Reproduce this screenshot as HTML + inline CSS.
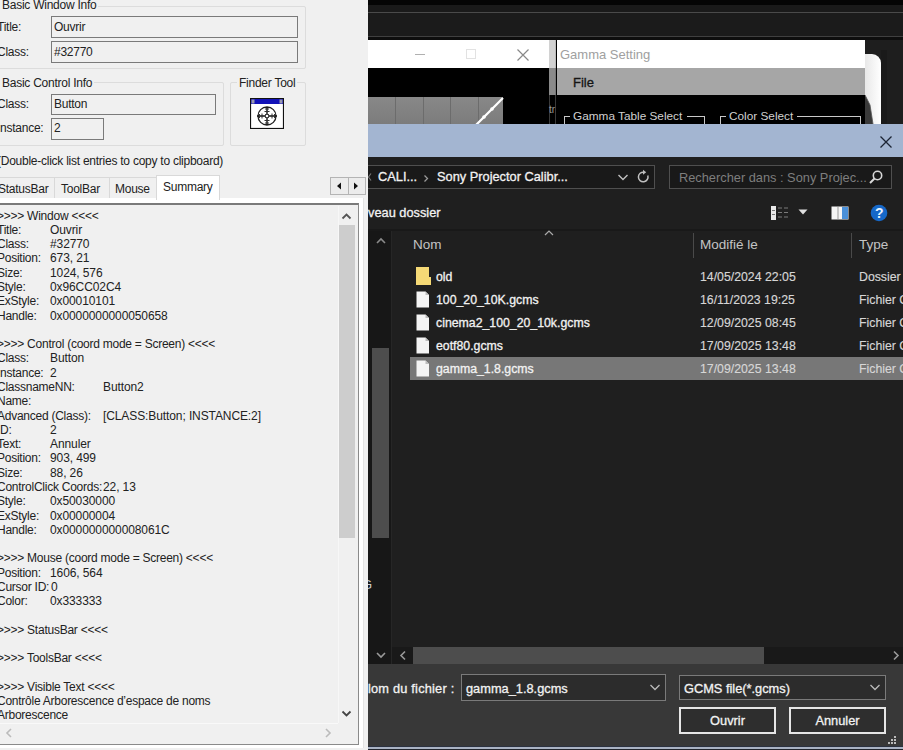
<!DOCTYPE html>
<html><head><meta charset="utf-8">
<style>
*{margin:0;padding:0;box-sizing:border-box}
html,body{width:903px;height:750px;overflow:hidden;background:#000}
body{position:relative;font-family:"Liberation Sans",sans-serif}
.a{position:absolute}
.t{position:absolute;white-space:pre;line-height:14px}
#left{position:absolute;left:0;top:0;width:368px;height:750px;background:#f0f0f0;overflow:hidden;color:#222;font-size:12px}
#left .t{letter-spacing:-0.25px}
.grp{position:absolute;border:1px solid #dcdcdc;border-radius:2px}
.inp{position:absolute;border:1px solid #7a7a7a;background:#f0f0f0}
.tab{position:absolute;top:177px;height:21px;border:1px solid #d9d9d9;border-bottom:none;background:#f0f0f0}
.ln{position:absolute;left:-3px;white-space:pre;line-height:14px;letter-spacing:-0.25px}
.v{position:absolute;white-space:pre;line-height:14px;letter-spacing:-0.1px}
#right{position:absolute;left:368px;top:0;width:535px;height:750px;overflow:hidden}
.dk{color:#f2f2f2;font-size:12.8px;-webkit-text-stroke:0.3px currentColor}
#right .t{-webkit-text-stroke:0}
#right .dk,#right .hd{-webkit-text-stroke:0.3px currentColor}
</style></head><body>

<div id="left">
  <!-- Basic Window Info -->
  <div class="grp" style="left:-10px;top:6px;width:316px;height:63px"></div>
  <div class="t" style="left:0;top:-2px;background:#f0f0f0;padding:0 2px">Basic Window Info</div>
  <div class="t" style="left:-3px;top:20px">Title:</div>
  <div class="inp" style="left:51px;top:16px;width:247px;height:22px"></div>
  <div class="t" style="left:54px;top:20px">Ouvrir</div>
  <div class="t" style="left:-3px;top:45px">Class:</div>
  <div class="inp" style="left:51px;top:41px;width:247px;height:22px"></div>
  <div class="t" style="left:54px;top:45px">#32770</div>

  <!-- Basic Control Info -->
  <div class="grp" style="left:-10px;top:82px;width:234px;height:64px"></div>
  <div class="t" style="left:0;top:76px;background:#f0f0f0;padding:0 2px">Basic Control Info</div>
  <div class="t" style="left:-3px;top:97px">Class:</div>
  <div class="inp" style="left:51px;top:94px;width:165px;height:21px"></div>
  <div class="t" style="left:54px;top:97px">Button</div>
  <div class="t" style="left:-3px;top:121px">Instance:</div>
  <div class="inp" style="left:51px;top:118px;width:53px;height:22px"></div>
  <div class="t" style="left:54px;top:121px">2</div>

  <!-- Finder Tool -->
  <div class="grp" style="left:230px;top:82px;width:76px;height:64px"></div>
  <div class="t" style="left:237px;top:76px;background:#f0f0f0;padding:0 2px">Finder Tool</div>
  <svg class="a" style="left:250px;top:98px" width="34" height="31" viewBox="0 0 34 31">
    <rect x="0.5" y="0.5" width="33" height="30" fill="#fff" stroke="#111" stroke-width="1.2"/>
    <rect x="1" y="1" width="32" height="5" fill="#1212b8"/>
    <rect x="1.5" y="1.5" width="3" height="4" fill="#9a9ab0"/><rect x="29.5" y="1.5" width="3" height="4" fill="#9a9ab0"/>
    <circle cx="17" cy="18" r="9" fill="none" stroke="#222" stroke-width="1.3"/>
    <path d="M7 18H15M19 18H27M17 9V16M17 20V27" stroke="#111" stroke-width="1.4"/>
    <path d="M9.5 16v4M12 15.5v5M22 15.5v5M24.5 16v4M15 11h4M14.5 13.5h5M14.5 22.5h5M15 25h4" stroke="#333" stroke-width="1"/>
    <rect x="15.5" y="16.5" width="3" height="3" fill="none" stroke="#444" stroke-width="1"/>
  </svg>

  <div class="t" style="left:-3px;top:154px">(Double-click list entries to copy to clipboard)</div>

  <!-- Tabs -->
  <div class="tab" style="left:-10px;width:65px"></div>
  <div class="tab" style="left:54px;width:56px"></div>
  <div class="tab" style="left:109px;width:48px"></div>
  <div class="t" style="left:-2px;top:182px">StatusBar</div>
  <div class="t" style="left:61px;top:182px">ToolBar</div>
  <div class="t" style="left:115px;top:182px">Mouse</div>
  <div class="a" style="left:0;top:198px;width:364px;height:550px;background:#fff;border-right:1px solid #e3e3e3"></div>
  <div class="a" style="left:156px;top:175px;width:64px;height:25px;background:#fff;border:1px solid #d9d9d9;border-bottom:none"></div>
  <div class="t" style="left:163px;top:180px">Summary</div>

  <div class="a" style="left:330px;top:177px;width:36px;height:18px;border:1px solid #b4b4b4;background:#ececec"></div>
  <div class="a" style="left:348px;top:178px;width:1px;height:16px;background:#b4b4b4"></div>
  <svg class="a" style="left:330px;top:177px" width="36" height="18"><path d="M7 9l4-3.5v7z M24 5.5l4 3.5-4 3.5z" fill="#111"/></svg>

  <!-- Edit control -->
  <div class="a" style="left:-4px;top:203px;width:363px;height:542px;border:1px solid #8a8a8a;border-top:2px solid #7a7a7a;background:#f0f0f0"></div>
  <!-- vscroll -->
  <div class="a" style="left:338px;top:206px;width:17px;height:517px;background:#f0f0f0;border-left:1px solid #f7f7f7"></div>
  <div class="a" style="left:339px;top:225px;width:16px;height:313px;background:#cdcdcd"></div>
  <svg class="a" style="left:338px;top:209px" width="17" height="14"><path d="M4.5 9.5L8.5 5.5L12.5 9.5" fill="none" stroke="#555" stroke-width="1.8"/></svg>
  <svg class="a" style="left:338px;top:707px" width="17" height="14"><path d="M4.5 4.5L8.5 8.5L12.5 4.5" fill="none" stroke="#444" stroke-width="1.8"/></svg>
  <!-- hscroll -->
  <div class="a" style="left:0;top:723px;width:338px;height:21px;background:#f0f0f0;border-top:1px solid #f9f9f9"></div>
  <svg class="a" style="left:2px;top:726px" width="14" height="14"><path d="M9 3L5 7L9 11" fill="none" stroke="#bbb" stroke-width="1.6"/></svg>
  <svg class="a" style="left:321px;top:726px" width="14" height="14"><path d="M5 3L9 7L5 11" fill="none" stroke="#bbb" stroke-width="1.6"/></svg>

  <div id="lines">
<div class="ln" style="top:208.6px">&gt;&gt;&gt;&gt; Window &lt;&lt;&lt;&lt;</div>
<div class="ln" style="top:222.9px">Title:</div>
<div class="v" style="left:50px;top:222.9px">Ouvrir</div>
<div class="ln" style="top:237.2px">Class:</div>
<div class="v" style="left:50px;top:237.2px">#32770</div>
<div class="ln" style="top:251.4px">Position:</div>
<div class="v" style="left:50px;top:251.4px">673, 21</div>
<div class="ln" style="top:265.7px">Size:</div>
<div class="v" style="left:50px;top:265.7px">1024, 576</div>
<div class="ln" style="top:280.0px">Style:</div>
<div class="v" style="left:50px;top:280.0px">0x96CC02C4</div>
<div class="ln" style="top:294.3px">ExStyle:</div>
<div class="v" style="left:50px;top:294.3px">0x00010101</div>
<div class="ln" style="top:308.6px">Handle:</div>
<div class="v" style="left:50px;top:308.6px">0x0000000000050658</div>
<div class="ln" style="top:337.1px">&gt;&gt;&gt;&gt; Control (coord mode = Screen) &lt;&lt;&lt;&lt;</div>
<div class="ln" style="top:351.4px">Class:</div>
<div class="v" style="left:50px;top:351.4px">Button</div>
<div class="ln" style="top:365.7px">Instance:</div>
<div class="v" style="left:50px;top:365.7px">2</div>
<div class="ln" style="top:380.0px">ClassnameNN:</div>
<div class="v" style="left:103px;top:380.0px">Button2</div>
<div class="ln" style="top:394.2px">Name:</div>
<div class="ln" style="top:408.5px">Advanced (Class):</div>
<div class="v" style="left:103px;top:408.5px">[CLASS:Button; INSTANCE:2]</div>
<div class="ln" style="top:422.8px">ID:</div>
<div class="v" style="left:50px;top:422.8px">2</div>
<div class="ln" style="top:437.1px">Text:</div>
<div class="v" style="left:50px;top:437.1px">Annuler</div>
<div class="ln" style="top:451.4px">Position:</div>
<div class="v" style="left:50px;top:451.4px">903, 499</div>
<div class="ln" style="top:465.6px">Size:</div>
<div class="v" style="left:50px;top:465.6px">88, 26</div>
<div class="ln" style="top:479.9px">ControlClick Coords:</div>
<div class="v" style="left:103px;top:479.9px">22, 13</div>
<div class="ln" style="top:494.2px">Style:</div>
<div class="v" style="left:50px;top:494.2px">0x50030000</div>
<div class="ln" style="top:508.5px">ExStyle:</div>
<div class="v" style="left:50px;top:508.5px">0x00000004</div>
<div class="ln" style="top:522.8px">Handle:</div>
<div class="v" style="left:50px;top:522.8px">0x000000000008061C</div>
<div class="ln" style="top:551.3px">&gt;&gt;&gt;&gt; Mouse (coord mode = Screen) &lt;&lt;&lt;&lt;</div>
<div class="ln" style="top:565.6px">Position:</div>
<div class="v" style="left:50px;top:565.6px">1606, 564</div>
<div class="ln" style="top:579.9px">Cursor ID:</div>
<div class="v" style="left:51px;top:579.9px">0</div>
<div class="ln" style="top:594.2px">Color:</div>
<div class="v" style="left:50px;top:594.2px">0x333333</div>
<div class="ln" style="top:622.7px">&gt;&gt;&gt;&gt; StatusBar &lt;&lt;&lt;&lt;</div>
<div class="ln" style="top:651.3px">&gt;&gt;&gt;&gt; ToolsBar &lt;&lt;&lt;&lt;</div>
<div class="ln" style="top:679.8px">&gt;&gt;&gt;&gt; Visible Text &lt;&lt;&lt;&lt;</div>
<div class="ln" style="top:694.1px">Contrôle Arborescence d’espace de noms</div>
<div class="ln" style="top:708.4px">Arborescence</div>
  </div>
</div>

<div id="right">
  <!-- top dark bands (coords relative: x-368) -->
  <div class="a" style="left:0;top:0;width:535px;height:5px;background:#050505"></div>
  <div class="a" style="left:0;top:5px;width:535px;height:7px;background:#1a1a1a"></div>
  <div class="a" style="left:0;top:12px;width:535px;height:1px;background:#4a4a4a"></div>
  <div class="a" style="left:0;top:13px;width:535px;height:23px;background:#1b1b1b"></div>
  <div class="a" style="left:0;top:36px;width:535px;height:1px;background:#404040"></div>
  <div class="a" style="left:0;top:37px;width:535px;height:3px;background:#0e0e0e"></div>

  <!-- left app window -->
  <div class="a" style="left:0;top:40px;width:181px;height:28px;background:#fff"></div>
  <div class="a" style="left:47px;top:54px;width:10px;height:1px;background:#b0b0b0"></div>
  <div class="a" style="left:98px;top:49px;width:10px;height:10px;border:1px solid #e2e2e2"></div>
  <svg class="a" style="left:148px;top:48px" width="14" height="14"><path d="M1.5 1.5L12.5 12.5M12.5 1.5L1.5 12.5" stroke="#888" stroke-width="1.2"/></svg>
  <div class="a" style="left:0;top:68px;width:181px;height:56px;background:#000"></div>
  <div class="a" style="left:0;top:97px;width:135px;height:27px;background:linear-gradient(#888,#7c7c7c)"></div>
  <div class="a" style="left:27px;top:97px;width:1px;height:27px;background:#6c6c6c"></div>
  <div class="a" style="left:55px;top:97px;width:1px;height:27px;background:#6c6c6c"></div>
  <div class="a" style="left:82px;top:97px;width:1px;height:27px;background:#6c6c6c"></div>
  <div class="a" style="left:110px;top:97px;width:1px;height:27px;background:#6c6c6c"></div>
  <svg class="a" style="left:105px;top:97px" width="32" height="27"><path d="M3 28L30 1" stroke="#fff" stroke-width="2.2"/><circle cx="19" cy="12" r="1.8" fill="#fff"/><circle cx="11" cy="20" r="1.8" fill="#fff"/></svg>
  <!-- separator strip -->
  <div class="a" style="left:181px;top:40px;width:7px;height:28px;background:#d2d2d2;border-right:1px solid #bbb"></div>
  <div class="a" style="left:181px;top:68px;width:7px;height:27px;background:#8a8a8a;border-right:1px solid #777"></div>
  <div class="a" style="left:181px;top:95px;width:1px;height:29px;background:#3a3a3a"></div>
  <div class="a" style="left:187px;top:95px;width:1px;height:29px;background:#3a3a3a"></div>

  <!-- Gamma setting window -->
  <div class="a" style="left:189px;top:40px;width:308px;height:28px;background:#fff"></div>
  <div class="t" style="left:192px;top:47px;font-size:13px;color:#a0a0a0;line-height:15px">Gamma Setting</div>
  <div class="a" style="left:189px;top:68px;width:308px;height:27px;background:#a6a6a6"></div>
  <div class="t hd" style="left:205px;top:75px;font-size:13px;color:#151515;line-height:15px">File</div>
  <div class="a" style="left:189px;top:95px;width:308px;height:29px;background:#000"></div>
  <div class="t" style="left:181px;top:104px;font-size:10px;color:#999;line-height:12px">tr</div>
  <!-- group boxes -->
  <div class="a" style="left:196px;top:116px;width:1px;height:10px;background:#c8c8c8"></div>
  <div class="a" style="left:196px;top:116px;width:6px;height:1px;background:#c8c8c8"></div>
  <div class="t" style="left:205px;top:109px;font-size:11.8px;color:#d0d0d0;line-height:15px">Gamma Table Select</div>
  <div class="a" style="left:319px;top:116px;width:17px;height:1px;background:#c8c8c8"></div>
  <div class="a" style="left:336px;top:116px;width:1px;height:10px;background:#c8c8c8"></div>
  <div class="a" style="left:352px;top:116px;width:1px;height:10px;background:#c8c8c8"></div>
  <div class="a" style="left:352px;top:116px;width:6px;height:1px;background:#c8c8c8"></div>
  <div class="t" style="left:361px;top:109px;font-size:11.8px;color:#d0d0d0;line-height:15px">Color Select</div>
  <div class="a" style="left:429px;top:116px;width:64px;height:1px;background:#c8c8c8"></div>
  <div class="a" style="left:492px;top:116px;width:1px;height:10px;background:#c8c8c8"></div>
  <!-- right of gamma window -->
  <div class="a" style="left:497px;top:40px;width:38px;height:84px;background:#1e1e1e"></div>
  <div class="a" style="left:497px;top:54px;width:16px;height:72px;background:linear-gradient(90deg,#e8e8e8,#fff);border-top-right-radius:9px"></div>
  <svg class="a" style="left:497px;top:95px" width="10" height="29"><path d="M0 0L5 10L8 29H0z" fill="#3a3a3a"/><path d="M0 0L5 10L8 29" fill="none" stroke="#555" stroke-width="0.8"/></svg>
  <div class="a" style="left:513px;top:50px;width:6px;height:74px;background:#1a1a1a"></div>

  <!-- dialog title bar -->
  <div class="a" style="left:0;top:124px;width:535px;height:33px;background:#a3b5d1"></div>
  <svg class="a" style="left:512px;top:136px" width="12" height="12"><path d="M0.5 0.5L11.5 11.5M11.5 0.5L0.5 11.5" stroke="#1c2434" stroke-width="1.3"/></svg>

  <!-- dialog body -->
  <div class="a" style="left:0;top:157px;width:535px;height:507px;background:#1f1f1f"></div>
  <!-- address bar -->
  <div class="a" style="left:-20px;top:165px;width:307px;height:24px;border:1px solid #4f4f4f;background:#191919"></div>
  <svg class="a" style="left:0;top:172px" width="4" height="10"><path d="M3 1.5L0.5 5L3 8.5" fill="none" stroke="#777" stroke-width="1.2"/></svg>
  <div class="t dk" style="left:10px;top:168.5px;line-height:15px">CALI...</div>
  <svg class="a" style="left:54px;top:172px" width="8" height="12"><path d="M2.5 3.5L5.5 6.5L2.5 9.5" fill="none" stroke="#9a9a9a" stroke-width="1.3"/></svg>
  <div class="t dk" style="left:69px;top:168.5px;line-height:15px">Sony Projector Calibr...</div>
  <svg class="a" style="left:248px;top:170px" width="14" height="14"><path d="M2.5 5L7 9.5L11.5 5" fill="none" stroke="#c0c0c0" stroke-width="1.4"/></svg>
  <svg class="a" style="left:268px;top:169px" width="16" height="16"><path d="M11.8 6.5A4.8 4.8 0 1 1 8 3.2" fill="none" stroke="#c0c0c0" stroke-width="1.5"/><path d="M7 0.8L10.2 3.2L7 5.8z" fill="#c0c0c0"/></svg>
  <!-- search -->
  <div class="a" style="left:301px;top:165px;width:223px;height:24px;border:1px solid #4f4f4f;background:#191919"></div>
  <div class="t" style="left:311px;top:170px;font-size:12.8px;color:#7e7e7e;line-height:15px;-webkit-text-stroke:0">Rechercher dans : Sony Projec...</div>
  <svg class="a" style="left:500px;top:169px" width="16" height="16"><circle cx="9.5" cy="6.5" r="4.2" fill="none" stroke="#d8d8d8" stroke-width="1.6"/><path d="M6.5 9.5L2 14" stroke="#d8d8d8" stroke-width="2"/></svg>

  <!-- toolbar -->
  <div class="t dk" style="left:0;top:205px;line-height:15px">veau dossier</div>
  <svg class="a" style="left:402px;top:205px" width="20" height="16"><rect x="1" y="1" width="5" height="14" fill="#e8e8e8"/><path d="M2 5.5h3M2 9.5h3" stroke="#777" stroke-width="1"/><path d="M8 3h4M14 3h4M8 7.5h4M14 7.5h4M8 12h4M14 12h4" stroke="#7a7a7a" stroke-width="1.2"/></svg>
  <svg class="a" style="left:430px;top:208px" width="10" height="8"><path d="M0.5 1.5h9L5 6.5z" fill="#e0e0e0"/></svg>
  <svg class="a" style="left:463px;top:206px" width="19" height="15"><rect x="0.5" y="0.5" width="17" height="13" fill="#f5f5f5"/><rect x="6.5" y="1" width="1" height="12" fill="#999"/><rect x="11" y="1" width="6" height="12" fill="#4a90d9"/></svg>
  <svg class="a" style="left:502px;top:203.5px" width="18" height="18"><circle cx="9" cy="9" r="8.3" fill="#1668c8"/><text x="9.3" y="14.2" text-anchor="middle" font-family="Liberation Sans" font-weight="bold" font-size="14" fill="#e8f4ff">?</text></svg>

  <!-- nav pane -->
  <div class="a" style="left:0;top:230px;width:23px;height:434px;background:#171717"></div>
  <svg class="a" style="left:6px;top:235px" width="14" height="12"><path d="M3 8L7 4L11 8" fill="none" stroke="#8a8a8a" stroke-width="1.6"/></svg>
  <div class="a" style="left:4px;top:348px;width:17px;height:190px;background:#4d4d4d"></div>
  <div class="t" style="left:-6px;top:577px;font-size:13px;color:#cfcfcf;line-height:15px">G</div>
  <svg class="a" style="left:6px;top:649px" width="14" height="12"><path d="M3 4L7 8L11 4" fill="none" stroke="#9a9a9a" stroke-width="1.6"/></svg>
  <div class="a" style="left:23px;top:230px;width:1px;height:434px;background:#262626"></div>

  <!-- list header -->
  <div class="a" style="left:0;top:229px;width:535px;height:2px;background:#191919"></div>
  <div class="t" style="left:45px;top:237px;font-size:13.5px;color:#c4c4c4;line-height:15px">Nom</div>
  <svg class="a" style="left:175px;top:229px" width="12" height="8"><path d="M2 6L6 2L10 6" fill="none" stroke="#aaa" stroke-width="1.2"/></svg>
  <div class="a" style="left:325px;top:233px;width:1px;height:25px;background:#4a4a4a"></div>
  <div class="t" style="left:332px;top:237px;font-size:13.5px;color:#c4c4c4;line-height:15px">Modifié le</div>
  <div class="a" style="left:483px;top:233px;width:1px;height:25px;background:#4a4a4a"></div>
  <div class="t" style="left:491px;top:237px;font-size:13.5px;color:#c4c4c4;line-height:15px">Type</div>

  <!-- rows -->
  <div class="a" style="left:42px;top:357px;width:493px;height:23px;background:#777"></div>
  <svg class="a" style="left:48px;top:267px" width="16" height="18"><path d="M0 0h13v10h2v8H0z" fill="#f5d976"/></svg>
<div class="t dk" style="left:68px;top:269.5px;line-height:15px;font-size:12.3px">old</div>
<div class="t dk" style="left:332px;top:269.5px;line-height:15px;font-size:12.3px;color:#d6d6d6;-webkit-text-stroke:0.15px currentColor">14/05/2024 22:05</div>
<div class="t dk" style="left:491px;top:269.5px;line-height:15px;font-size:12.3px;color:#d6d6d6;-webkit-text-stroke:0.15px currentColor">Dossier</div>
<svg class="a" style="left:48px;top:291px" width="14" height="17"><path d="M0.5 0.5h9l3.5 3.5v12.5H0.5z" fill="#f4f4f4"/><path d="M9.5 0.5v3.5h3.5" fill="#bbb"/></svg>
<div class="t dk" style="left:68px;top:292.5px;line-height:15px;font-size:12.3px">100_20_10K.gcms</div>
<div class="t dk" style="left:332px;top:292.5px;line-height:15px;font-size:12.3px;color:#d6d6d6;-webkit-text-stroke:0.15px currentColor">16/11/2023 19:25</div>
<div class="t dk" style="left:491px;top:292.5px;line-height:15px;font-size:12.3px;color:#d6d6d6;-webkit-text-stroke:0.15px currentColor">Fichier GCMS</div>
<svg class="a" style="left:48px;top:314px" width="14" height="17"><path d="M0.5 0.5h9l3.5 3.5v12.5H0.5z" fill="#f4f4f4"/><path d="M9.5 0.5v3.5h3.5" fill="#bbb"/></svg>
<div class="t dk" style="left:68px;top:315.5px;line-height:15px;font-size:12.3px">cinema2_100_20_10k.gcms</div>
<div class="t dk" style="left:332px;top:315.5px;line-height:15px;font-size:12.3px;color:#d6d6d6;-webkit-text-stroke:0.15px currentColor">12/09/2025 08:45</div>
<div class="t dk" style="left:491px;top:315.5px;line-height:15px;font-size:12.3px;color:#d6d6d6;-webkit-text-stroke:0.15px currentColor">Fichier GCMS</div>
<svg class="a" style="left:48px;top:337px" width="14" height="17"><path d="M0.5 0.5h9l3.5 3.5v12.5H0.5z" fill="#f4f4f4"/><path d="M9.5 0.5v3.5h3.5" fill="#bbb"/></svg>
<div class="t dk" style="left:68px;top:338.5px;line-height:15px;font-size:12.3px">eotf80.gcms</div>
<div class="t dk" style="left:332px;top:338.5px;line-height:15px;font-size:12.3px;color:#d6d6d6;-webkit-text-stroke:0.15px currentColor">17/09/2025 13:48</div>
<div class="t dk" style="left:491px;top:338.5px;line-height:15px;font-size:12.3px;color:#d6d6d6;-webkit-text-stroke:0.15px currentColor">Fichier GCMS</div>
<svg class="a" style="left:48px;top:360px" width="14" height="17"><path d="M0.5 0.5h9l3.5 3.5v12.5H0.5z" fill="#f4f4f4"/><path d="M9.5 0.5v3.5h3.5" fill="#bbb"/></svg>
<div class="t dk" style="left:68px;top:361.5px;line-height:15px;font-size:12.3px">gamma_1.8.gcms</div>
<div class="t dk" style="left:332px;top:361.5px;line-height:15px;font-size:12.3px;color:#d6d6d6;-webkit-text-stroke:0.15px currentColor">17/09/2025 13:48</div>
<div class="t dk" style="left:491px;top:361.5px;line-height:15px;font-size:12.3px;color:#d6d6d6;-webkit-text-stroke:0.15px currentColor">Fichier GCMS</div>

  <!-- hscroll -->
  <div class="a" style="left:24px;top:647px;width:511px;height:17px;background:#191919"></div>
  <svg class="a" style="left:29px;top:649px" width="12" height="13"><path d="M8 2.5L4 6.5L8 10.5" fill="none" stroke="#9a9a9a" stroke-width="1.6"/></svg>
  <div class="a" style="left:45px;top:647px;width:351px;height:17px;background:#4d4d4d"></div>
  <svg class="a" style="left:522px;top:649px" width="12" height="13"><path d="M4 2.5L8 6.5L4 10.5" fill="none" stroke="#9a9a9a" stroke-width="1.6"/></svg>

  <!-- bottom panel -->
  <div class="a" style="left:0;top:664px;width:535px;height:82px;background:#383838"></div>
  <div class="a" style="left:0;top:746px;width:535px;height:1px;background:#2c3240"></div>
  <div class="a" style="left:0;top:747px;width:535px;height:2px;background:#aab3c4"></div>
  <div class="a" style="left:0;top:749px;width:535px;height:1px;background:#22262e"></div>
  <div class="t dk" style="left:0;top:680.5px;line-height:15px;letter-spacing:0.2px">lom du fichier&nbsp;:</div>
  <div class="a" style="left:93px;top:674px;width:205px;height:27px;border:1px solid #7a7a7a;background:#2c2c2c"></div>
  <div class="t dk" style="left:98px;top:680.5px;line-height:15px">gamma_1.8.gcms</div>
  <svg class="a" style="left:281px;top:682px" width="12" height="10"><path d="M1.5 3L6 7.5L10.5 3" fill="none" stroke="#bbb" stroke-width="1.3"/></svg>
  <div class="a" style="left:311px;top:675px;width:207px;height:25px;border:1px solid #7a7a7a;background:#2c2c2c"></div>
  <div class="t dk" style="left:316px;top:680.5px;line-height:15px">GCMS file(*.gcms)</div>
  <svg class="a" style="left:501px;top:682px" width="12" height="10"><path d="M1.5 3L6 7.5L10.5 3" fill="none" stroke="#bbb" stroke-width="1.3"/></svg>
  <div class="a" style="left:311px;top:707px;width:97px;height:27px;border:2px solid #e6e6e6;background:#2e2e2e"></div>
  <div class="t dk" style="left:311px;width:97px;text-align:center;top:713px;line-height:15px">Ouvrir</div>
  <div class="a" style="left:421px;top:707px;width:97px;height:27px;border:2px solid #e6e6e6;background:#2e2e2e"></div>
  <div class="t dk" style="left:421px;width:97px;text-align:center;top:713px;line-height:15px">Annuler</div>
  <svg class="a" style="left:516px;top:734px" width="14" height="13"><g fill="#bbb"><rect x="10" y="2" width="2" height="2"/><rect x="7" y="5" width="2" height="2"/><rect x="10" y="5" width="2" height="2"/><rect x="4" y="8" width="2" height="2"/><rect x="7" y="8" width="2" height="2"/><rect x="10" y="8" width="2" height="2"/></g></svg>
</div>

</body></html>
